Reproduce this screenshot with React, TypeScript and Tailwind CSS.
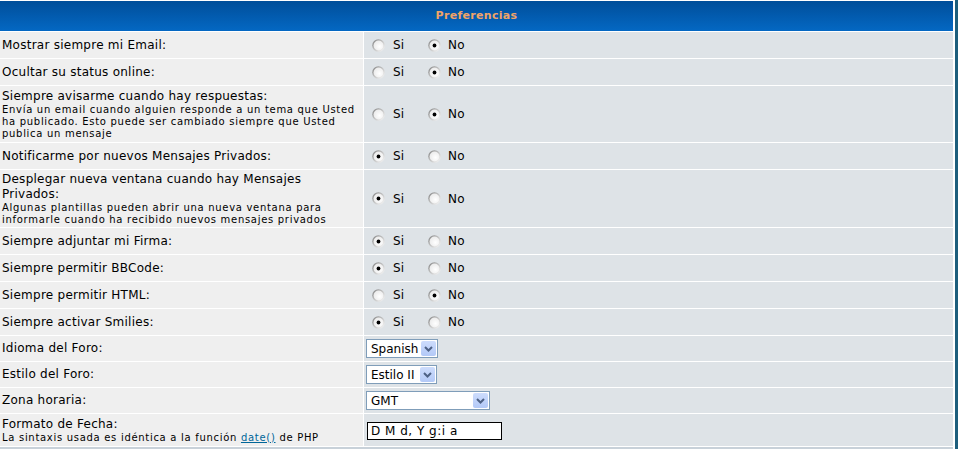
import React from "react";

const F = "font-['DejaVu_Sans',Verdana,sans-serif]";

function Radio({ checked }: { checked: boolean }) {
  return (
    <svg width="13" height="13" viewBox="0 0 13 13" className="shrink-0">
      <defs>
        <linearGradient id="rimA" x1="0" y1="0" x2="1" y2="1">
          <stop offset="0" stopColor="#7a7a7a" />
          <stop offset="0.5" stopColor="#c4c4c4" />
          <stop offset="1" stopColor="#ffffff" />
        </linearGradient>
        <radialGradient id="fillA" cx="0.6" cy="0.6" r="0.6">
          <stop offset="0" stopColor="#ffffff" />
          <stop offset="1" stopColor="#ececec" />
        </radialGradient>
      </defs>
      <circle cx="6.5" cy="6.5" r="6.3" fill="url(#rimA)" />
      <circle cx="6.5" cy="6.5" r="4.9" fill="url(#fillA)" />
      {checked && <circle cx="6.5" cy="6.5" r="1.9" fill="#000" />}
    </svg>
  );
}

function YesNo({ yes }: { yes: boolean }) {
  return (
    <div className="flex items-center pl-[8px] text-[12px] text-black tracking-[0.25px]">
      <Radio checked={yes} />
      <span className="ml-[8px] w-[35px]">Si</span>
      <Radio checked={!yes} />
      <span className="ml-[7px]">No</span>
    </div>
  );
}

function Select({ label, w }: { label: string; w: string }) {
  return (
    <div className={`flex items-center h-[19px] border border-[#7f9db9] bg-white ${w}`}>
      <span className="flex-1 pl-[4px] text-[12px] text-black leading-none">{label}</span>
      <span className="mr-px flex h-[15px] w-[15px] items-center justify-center rounded-[2px] bg-[linear-gradient(to_bottom,#cddcfc,#b3c9f7)]">
        <svg width="9" height="6" viewBox="0 0 9 6">
          <path d="M1 1 L4.5 4.5 L8 1" fill="none" stroke="#4d6185" strokeWidth="2" />
        </svg>
      </span>
    </div>
  );
}

type Row = {
  label: React.ReactNode;
  small?: React.ReactNode;
  right: React.ReactNode;
  h: string;
};

const rows: Row[] = [
  { label: "Mostrar siempre mi Email:", right: <YesNo yes={false} />, h: "h-[26px]" },
  { label: "Ocultar su status online:", right: <YesNo yes={false} />, h: "h-[26px]" },
  {
    label: "Siempre avisarme cuando hay respuestas:",
    small: (
      <>
        Envía un email cuando alguien responde a un tema que Usted
        <br />
        ha publicado. Esto puede ser cambiado siempre que Usted
        <br />
        publica un mensaje
      </>
    ),
    right: <YesNo yes={false} />,
    h: "h-[56px]",
  },
  { label: "Notificarme por nuevos Mensajes Privados:", right: <YesNo yes={true} />, h: "h-[26px]" },
  {
    label: (
      <>
        Desplegar nueva ventana cuando hay Mensajes
        <br />
        Privados:
      </>
    ),
    small: (
      <>
        Algunas plantillas pueden abrir una nueva ventana para
        <br />
        informarle cuando ha recibido nuevos mensajes privados
      </>
    ),
    right: <YesNo yes={true} />,
    h: "h-[57px]",
  },
  { label: "Siempre adjuntar mi Firma:", right: <YesNo yes={true} />, h: "h-[26px]" },
  { label: "Siempre permitir BBCode:", right: <YesNo yes={true} />, h: "h-[26px]" },
  { label: "Siempre permitir HTML:", right: <YesNo yes={false} />, h: "h-[26px]" },
  { label: "Siempre activar Smilies:", right: <YesNo yes={true} />, h: "h-[26px]" },
  {
    label: "Idioma del Foro:",
    right: (
      <div className="pl-[2px]">
        <Select label="Spanish" w="w-[72px]" />
      </div>
    ),
    h: "h-[25px]",
  },
  {
    label: "Estilo del Foro:",
    right: (
      <div className="pl-[2px]">
        <Select label="Estilo II" w="w-[71px]" />
      </div>
    ),
    h: "h-[25px]",
  },
  {
    label: "Zona horaria:",
    right: (
      <div className="pl-[2px]">
        <Select label="GMT" w="w-[124px]" />
      </div>
    ),
    h: "h-[25px]",
  },
  {
    label: "Formato de Fecha:",
    small: (
      <>
        La sintaxis usada es idéntica a la función{" "}
        <span className="text-[#006699] underline">date()</span> de PHP
      </>
    ),
    right: (
      <div className="pl-[3px] pt-[1px]">
        <div className="flex h-[18px] w-[135px] items-center border border-black bg-white pl-[3px] text-[12px] text-black tracking-[0.5px]">
          D M d, Y g:i a
        </div>
      </div>
    ),
    h: "h-[32px]",
  },
];

export default function App() {
  return (
    <div className={`${F} w-[958px] h-[449px] bg-[#1d5e7c] overflow-hidden`}>
      <div className="w-[955px] bg-white pt-px pr-[2px] flex flex-col gap-px">
        <div className="h-[30px] flex items-center justify-center bg-[linear-gradient(to_bottom,#004e9a,#0468c3)]">
          <span className="text-[11px] font-bold text-[#f0a468] tracking-[0.3px]">Preferencias</span>
        </div>
        {rows.map((r, i) => (
          <div key={i} className={`flex gap-px ${r.h}`}>
            <div className="w-[363px] shrink-0 bg-[#efefef] flex flex-col justify-center pl-[2px] text-black whitespace-nowrap">
              <div className="text-[12px] leading-[15px] tracking-[0.25px]">{r.label}</div>
              {r.small && <div className="text-[10px] leading-[12px] tracking-[0.7px]">{r.small}</div>}
            </div>
            <div className="flex-1 bg-[#dee3e7] flex items-center">{r.right}</div>
          </div>
        ))}
        <div className="h-[4px] bg-[#c8d1d9]" />
      </div>
    </div>
  );
}
